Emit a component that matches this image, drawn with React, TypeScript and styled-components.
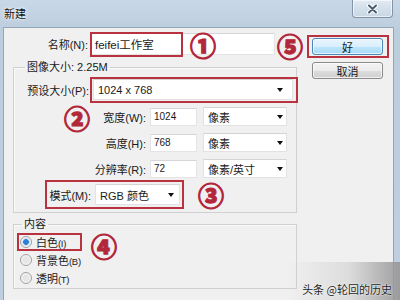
import React from "react";
import styled, { createGlobalStyle } from "styled-components";

const Global = createGlobalStyle`
  html, body { margin: 0; padding: 0; background: #f0f0f0; }
  body { font-family: "Liberation Sans", "Noto Sans CJK SC", sans-serif; }
  * { box-sizing: border-box; }
`;

const FONT = `"Liberation Sans", "Noto Sans CJK SC", sans-serif`;

const Window = styled.div`
  position: relative;
  width: 400px;
  height: 300px;
  overflow: hidden;
  background: linear-gradient(#c9d8e7, #bccddd 30px, #bfcfdf);
  display: flex;
  flex-direction: column;
  font-family: ${FONT};
  font-size: 11px;
  color: #1a1a1a;
`;

const TitleBar = styled.div`
  height: 27px;
  flex: none;
  display: flex;
  align-items: flex-start;
  padding-left: 4px;
`;

const Title = styled.div`
  margin-top: 8px;
  font-size: 11px;
  line-height: 12px;
  color: #111;
  text-shadow: 0 0 4px #fff, 0 0 2px #fff;
`;

const CloseBtn = styled.div`
  margin-left: auto;
  margin-right: 7px;
  width: 41px;
  height: 18px;
  border: 1px solid #8494a8;
  border-top: none;
  border-radius: 0 0 4px 4px;
  background: linear-gradient(#e3ebf3, #d3dfeb 50%, #c9d7e5);
  box-shadow: inset 0 0 0 1px rgba(255, 255, 255, 0.6);
  display: flex;
  align-items: center;
  justify-content: center;
`;

const Client = styled.div`
  flex: 1;
  margin: 0 6px 0 3px;
  background: #f0f0f0;
  border: 1px solid #95a5b7;
  border-bottom: none;
  display: flex;
`;

const LeftCol = styled.div`
  width: 293px;
  flex: none;
  display: flex;
  flex-direction: column;
`;

const RightCol = styled.div`
  margin-left: 15px;
  width: 71px;
  display: flex;
  flex-direction: column;
  gap: 7px;
  padding-top: 10px;
`;

const Row = styled.div<{ $top?: number }>`
  display: flex;
  align-items: center;
  margin-top: ${(p) => p.$top ?? 0}px;
`;

const Label = styled.div<{ $w: number; $gap?: number }>`
  width: ${(p) => p.$w}px;
  margin-right: ${(p) => p.$gap ?? 4}px;
  text-align: right;
  white-space: nowrap;
  flex: none;
`;

const TextInput = styled.div<{ $w: number; $h: number; $size?: number }>`
  width: ${(p) => p.$w}px;
  height: ${(p) => p.$h}px;
  background: #fff;
  border: 1px solid #e4e4e4;
  border-top-color: #d6d6d6;
  padding-left: 3px;
  display: flex;
  align-items: center;
  font-size: ${(p) => p.$size ?? 11}px;
  flex: none;
`;

const Select = styled.div<{ $w: number; $h: number; $pad: number; $ml?: number }>`
  width: ${(p) => p.$w}px;
  height: ${(p) => p.$h}px;
  margin-left: ${(p) => p.$ml ?? 0}px;
  background: #fff;
  border: 1px solid #e2e2e2;
  border-top-color: #d4d4d4;
  padding: 0 ${(p) => p.$pad}px 0 4px;
  display: flex;
  align-items: center;
  justify-content: space-between;
  flex: none;
`;

const Arrow = styled.span`
  width: 0;
  height: 0;
  border-left: 3.5px solid transparent;
  border-right: 3.5px solid transparent;
  border-top: 4px solid #111;
`;

const Group = styled.fieldset<{ $top: number; $pb: number }>`
  margin: ${(p) => p.$top}px 0 0 9px;
  width: 284px;
  padding: 0 0 ${(p) => p.$pb}px 0;
  border: 1px solid #d0d0d0;
  box-shadow: inset 1px 1px 0 #fafafa;
  min-width: 0;
`;

const Legend = styled.legend<{ $ml: number; $lh: number }>`
  margin-left: ${(p) => p.$ml}px;
  padding: 0 2px;
  line-height: ${(p) => p.$lh}px;
  font-size: 11px;
`;

const Button = styled.div<{ $default?: boolean }>`
  height: 17px;
  border: 1px solid ${(p) => (p.$default ? "#4a86b8" : "#8a8a8a")};
  border-radius: 3px;
  background: ${(p) =>
    p.$default
      ? "linear-gradient(#eaf5fd, #d9eefc 50%, #bee6fd 51%, #a7d9f5)"
      : "linear-gradient(#f4f4f4, #ebebeb 50%, #dddddd 51%, #cfcfcf)"};
  box-shadow: inset 0 0 0 1px rgba(255, 255, 255, 0.7);
  display: flex;
  align-items: center;
  justify-content: center;
  font-size: 11px;
`;

const RadioRow = styled.div<{ $top?: number }>`
  height: 18px;
  display: flex;
  align-items: center;
  padding-left: 6px;
  gap: 4px;
  margin-top: ${(p) => p.$top ?? 0}px;
`;

const Radio = styled.span<{ $on?: boolean }>`
  width: 12px;
  height: 12px;
  border-radius: 50%;
  border: 1px solid #a0a0a0;
  background: ${(p) =>
    p.$on
      ? "radial-gradient(circle, #2c7fd8 0 2.5px, #9cc4ee 3px, #f4f4f4 4px)"
      : "radial-gradient(circle, #e6e6e6 0 3px, #f8f8f8 5px)"};
  flex: none;
`;

const Small = styled.span`
  font-size: 9.5px;
  letter-spacing: -0.3px;
`;

const RedBox = styled.div`
  position: absolute;
  border: 2px solid #b9323f;
  pointer-events: none;
`;

const Num = styled.span`
  position: absolute;
  width: 28px;
  height: 28px;
  margin: -14px 0 0 -14px;
  display: flex;
  align-items: center;
  justify-content: center;
  font-family: "Noto Sans CJK SC", sans-serif;
  font-size: 26px;
  font-weight: 900;
  line-height: 1;
  color: #b3273a;
  -webkit-text-stroke: 1.1px #b3273a;
`;

const Watermark = styled.div`
  position: absolute;
  right: 0;
  bottom: 0;
  width: 112px;
  height: 38px;
  background: linear-gradient(to right, rgba(240, 240, 240, 0) 0%, rgba(200, 200, 200, 0.5) 55%, rgba(150, 150, 150, 0.9) 100%);
  display: flex;
  align-items: flex-end;
  justify-content: flex-end;
  padding: 0 8px 3px 0;
  font-family: "Noto Sans CJK SC", sans-serif;
  font-size: 11px;
  color: #222;
  text-shadow: 0 0 2px #fff, 0 0 1px #fff;
  white-space: nowrap;
`;

const box = (l: number, t: number, w: number, h: number) => ({ left: l, top: t, width: w, height: h });

export default function App() {
  return (
    <>
      <Global />
      <Window>
        <TitleBar>
          <Title>新建</Title>
          <CloseBtn>
            <svg width="11" height="10" viewBox="0 0 11 10">
              <path d="M2 1.5 L9 8.5 M9 1.5 L2 8.5" stroke="#fff" strokeWidth="4" strokeLinecap="round" />
              <path d="M2 1.5 L9 8.5 M9 1.5 L2 8.5" stroke="#4c5c70" strokeWidth="2" strokeLinecap="round" />
            </svg>
          </CloseBtn>
        </TitleBar>
        <Client>
          <LeftCol>
            <Row $top={5}>
              <Label $w={84} $gap={3}>名称(N):</Label>
              <TextInput $w={184} $h={22} $size={11.5}>feifei工作室</TextInput>
            </Row>
            <Group $top={4} $pb={7}>
              <Legend $ml={11} $lh={16}>图像大小: 2.25M</Legend>
              <Row $top={4}>
                <Label $w={75}>预设大小(P):</Label>
                <Select $w={200} $h={21} $pad={9}>
                  <span>1024 x 768</span>
                  <Arrow />
                </Select>
              </Row>
              <Row $top={7}>
                <Label $w={132}>宽度(W):</Label>
                <TextInput $w={47} $h={18} $size={10}>1024</TextInput>
                <Select $w={84} $h={19} $pad={3} $ml={6}>
                  <span>像素</span>
                  <Arrow />
                </Select>
              </Row>
              <Row $top={7}>
                <Label $w={132}>高度(H):</Label>
                <TextInput $w={47} $h={18} $size={10}>768</TextInput>
                <Select $w={84} $h={19} $pad={3} $ml={6}>
                  <span>像素</span>
                  <Arrow />
                </Select>
              </Row>
              <Row $top={7}>
                <Label $w={132}>分辨率(R):</Label>
                <TextInput $w={47} $h={18} $size={10}>72</TextInput>
                <Select $w={84} $h={19} $pad={3} $ml={6}>
                  <span>像素/英寸</span>
                  <Arrow />
                </Select>
              </Row>
              <Row $top={6}>
                <Label $w={77}>模式(M):</Label>
                <Select $w={85} $h={21} $pad={5}>
                  <span>RGB 颜色</span>
                  <Arrow />
                </Select>
              </Row>
            </Group>
            <Group $top={4} $pb={1}>
              <Legend $ml={8} $lh={14}>内容</Legend>
              <RadioRow $top={2}>
                <Radio $on />
                <span>
                  白色<Small>(I)</Small>
                </span>
              </RadioRow>
              <RadioRow>
                <Radio />
                <span>
                  背景色<Small>(B)</Small>
                </span>
              </RadioRow>
              <RadioRow>
                <Radio />
                <span>
                  透明<Small>(T)</Small>
                </span>
              </RadioRow>
            </Group>
          </LeftCol>
          <RightCol>
            <Button $default>好</Button>
            <Button>取消</Button>
          </RightCol>
        </Client>

        <RedBox style={box(90, 32, 93, 25)} />
        <RedBox style={box(307, 35, 82, 23)} />
        <RedBox style={box(90, 77, 208, 26)} />
        <RedBox style={box(45, 180, 139, 29)} />
        <RedBox style={box(17, 233, 65, 18)} />

        <Num style={{ left: 203, top: 45 }}>①</Num>
        <Num style={{ left: 77, top: 118 }}>②</Num>
        <Num style={{ left: 211, top: 195 }}>③</Num>
        <Num style={{ left: 104, top: 246 }}>④</Num>
        <Num style={{ left: 290, top: 46 }}>⑤</Num>

        <Watermark>头条 @轮回的历史</Watermark>
      </Window>
    </>
  );
}
